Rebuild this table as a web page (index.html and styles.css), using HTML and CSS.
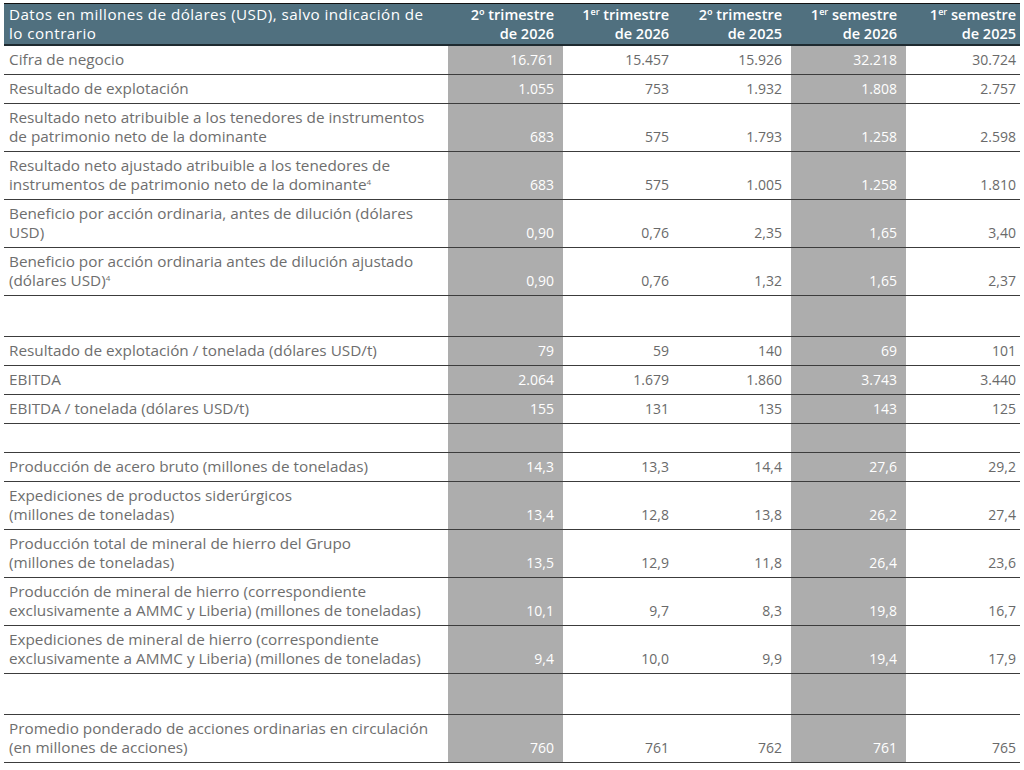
FILE: index.html
```html
<!DOCTYPE html>
<html lang="es">
<head>
<meta charset="utf-8">
<title>Datos financieros</title>
<link rel="stylesheet" href="styles.css">
</head>
<body>
<table class="fin">
  <colgroup>
    <col class="c-label">
    <col class="c-q1">
    <col class="c-q2">
    <col class="c-q3">
    <col class="c-s1">
    <col class="c-s2">
  </colgroup>
  <thead>
    <tr>
      <th class="lbl">Datos en millones de dólares (USD), salvo indicación de<br>lo contrario</th>
      <th>2º trimestre<br>de 2026</th>
      <th>1<sup>er</sup> trimestre<br>de 2026</th>
      <th>2º trimestre<br>de 2025</th>
      <th>1<sup>er</sup> semestre<br>de 2026</th>
      <th class="last">1<sup>er</sup> semestre<br>de 2025</th>
    </tr>
  </thead>
  <tbody>
    <tr><td class="lbl">Cifra de negocio</td><td class="hl">16.761</td><td>15.457</td><td>15.926</td><td class="hl">32.218</td><td class="last">30.724</td></tr>
    <tr><td class="lbl">Resultado de explotación</td><td class="hl">1.055</td><td>753</td><td>1.932</td><td class="hl">1.808</td><td class="last">2.757</td></tr>
    <tr><td class="lbl">Resultado neto atribuible a los tenedores de instrumentos<br>de patrimonio neto de la dominante</td><td class="hl">683</td><td>575</td><td>1.793</td><td class="hl">1.258</td><td class="last">2.598</td></tr>
    <tr><td class="lbl">Resultado neto ajustado atribuible a los tenedores de<br>instrumentos de patrimonio neto de la dominante<sup class="fn">4</sup></td><td class="hl">683</td><td>575</td><td>1.005</td><td class="hl">1.258</td><td class="last">1.810</td></tr>
    <tr><td class="lbl">Beneficio por acción ordinaria, antes de dilución (dólares<br>USD)</td><td class="hl">0,90</td><td>0,76</td><td>2,35</td><td class="hl">1,65</td><td class="last">3,40</td></tr>
    <tr><td class="lbl">Beneficio por acción ordinaria antes de dilución ajustado<br>(dólares USD)<sup class="fn">4</sup></td><td class="hl">0,90</td><td>0,76</td><td>1,32</td><td class="hl">1,65</td><td class="last">2,37</td></tr>
    <tr class="gap-tall"><td class="lbl"></td><td class="hl"></td><td></td><td></td><td class="hl"></td><td class="last"></td></tr>
    <tr><td class="lbl">Resultado de explotación / tonelada (dólares USD/t)</td><td class="hl">79</td><td>59</td><td>140</td><td class="hl">69</td><td class="last">101</td></tr>
    <tr><td class="lbl">EBITDA</td><td class="hl">2.064</td><td>1.679</td><td>1.860</td><td class="hl">3.743</td><td class="last">3.440</td></tr>
    <tr><td class="lbl">EBITDA / tonelada (dólares USD/t)</td><td class="hl">155</td><td>131</td><td>135</td><td class="hl">143</td><td class="last">125</td></tr>
    <tr class="gap"><td class="lbl"></td><td class="hl"></td><td></td><td></td><td class="hl"></td><td class="last"></td></tr>
    <tr><td class="lbl">Producción de acero bruto (millones de toneladas)</td><td class="hl">14,3</td><td>13,3</td><td>14,4</td><td class="hl">27,6</td><td class="last">29,2</td></tr>
    <tr><td class="lbl">Expediciones de productos siderúrgicos<br>(millones de toneladas)</td><td class="hl">13,4</td><td>12,8</td><td>13,8</td><td class="hl">26,2</td><td class="last">27,4</td></tr>
    <tr><td class="lbl">Producción total de mineral de hierro del Grupo<br>(millones de toneladas)</td><td class="hl">13,5</td><td>12,9</td><td>11,8</td><td class="hl">26,4</td><td class="last">23,6</td></tr>
    <tr><td class="lbl">Producción de mineral de hierro (correspondiente<br>exclusivamente a AMMC y Liberia) (millones de toneladas)</td><td class="hl">10,1</td><td>9,7</td><td>8,3</td><td class="hl">19,8</td><td class="last">16,7</td></tr>
    <tr><td class="lbl">Expediciones de mineral de hierro (correspondiente<br>exclusivamente a AMMC y Liberia) (millones de toneladas)</td><td class="hl">9,4</td><td>10,0</td><td>9,9</td><td class="hl">19,4</td><td class="last">17,9</td></tr>
    <tr class="gap-tall"><td class="lbl"></td><td class="hl"></td><td></td><td></td><td class="hl"></td><td class="last"></td></tr>
    <tr><td class="lbl">Promedio ponderado de acciones ordinarias en circulación<br>(en millones de acciones)</td><td class="hl">760</td><td>761</td><td>762</td><td class="hl">761</td><td class="last">765</td></tr>
  </tbody>
</table>
</body>
</html>
```

FILE: styles.css
```css
html, body {
  background: #ffffff;
}
body {
  margin: 3px 4px 0 4px;
  font-family: "Open Sans", "Noto Sans", sans-serif;
  color: #6a6a6a;
}
.fin {
  width: 1016px;
  border-collapse: collapse;
  table-layout: fixed;
  font-size: 13.5px;
}
.c-label { width: 444px; }
.c-q1 { width: 115px; }
.c-q2 { width: 115px; }
.c-q3 { width: 113px; }
.c-s1 { width: 115px; }
.c-s2 { width: 114px; }

.fin th {
  background: #50707f;
  color: #ffffff;
  font-weight: 600;
  font-size: 14.5px;
  line-height: 19px;
  text-align: right;
  vertical-align: bottom;
  padding: 1px 9px 1px 0;
  border-top: 1px solid #111;
  border-bottom: 2px solid #1e2a30;
  white-space: nowrap;
}
.fin th.lbl {
  text-align: left;
  padding-left: 5px;
  font-weight: 500;
  font-size: 15.2px;
  letter-spacing: 0.45px;
}
.fin th.last, .fin td.last {
  padding-right: 4px;
}
.fin td {
  text-align: right;
  vertical-align: bottom;
  line-height: 19px;
  padding: 4px 9px 5px 0;
  border-bottom: 1px solid #3c3c3c;
  white-space: nowrap;
  font-size: 14px;
}
.fin td.lbl {
  text-align: left;
  vertical-align: top;
  padding-left: 5px;
  font-size: 15.3px;
  color: #6e6e6e;
}
.fin td.hl {
  background: #adadad;
  color: #ffffff;
}
.fin tr.gap-tall td {
  height: 31px;
}
.fin tr.gap td {
  height: 19px;
}
sup {
  font-size: 9px;
  line-height: 0;
  vertical-align: 5px;
}
sup.fn {
  font-size: 8px;
}
```
